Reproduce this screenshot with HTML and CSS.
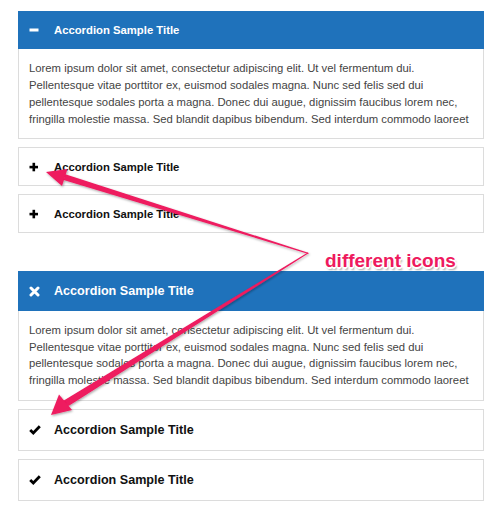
FILE: index.html
```html
<!DOCTYPE html>
<html>
<head>
<meta charset="utf-8">
<link rel="stylesheet" href="styles.css">
</head>
<body>
<div class="page">
  <div class="accordion first">
    <div class="item open">
      <div class="head">
        <span class="icon"><svg width="10" height="10" viewBox="0 0 10 10"><rect x="0.5" y="3.5" width="9" height="3" fill="#fff"/></svg></span>
        <span class="title">Accordion Sample Title</span>
      </div>
      <div class="body">
        <p>Lorem ipsum dolor sit amet, consectetur adipiscing elit. Ut vel fermentum dui. Pellentesque vitae porttitor ex, euismod sodales magna. Nunc sed felis sed dui pellentesque sodales porta a magna. Donec dui augue, dignissim faucibus lorem nec, fringilla molestie massa. Sed blandit dapibus bibendum. Sed interdum commodo laoreet</p>
      </div>
    </div>
    <div class="item">
      <div class="head">
        <span class="icon"><svg width="10" height="10" viewBox="0 0 10 10"><rect x="0.5" y="3.8" width="8.5" height="2.6" fill="#000"/><rect x="3.5" y="0.8" width="2.6" height="8.5" fill="#000"/></svg></span>
        <span class="title">Accordion Sample Title</span>
      </div>
    </div>
    <div class="item">
      <div class="head">
        <span class="icon"><svg width="10" height="10" viewBox="0 0 10 10"><rect x="0.5" y="3.8" width="8.5" height="2.6" fill="#000"/><rect x="3.5" y="0.8" width="2.6" height="8.5" fill="#000"/></svg></span>
        <span class="title">Accordion Sample Title</span>
      </div>
    </div>
  </div>

  <div class="callout"><span>different icons</span></div>

  <div class="accordion second">
    <div class="item open">
      <div class="head">
        <span class="icon"><svg width="11" height="11" viewBox="0 0 11 11"><path d="M2 2 L9 9 M9 2 L2 9" stroke="#fff" stroke-width="3" stroke-linecap="round"/></svg></span>
        <span class="title">Accordion Sample Title</span>
      </div>
      <div class="body">
        <p>Lorem ipsum dolor sit amet, consectetur adipiscing elit. Ut vel fermentum dui. Pellentesque vitae porttitor ex, euismod sodales magna. Nunc sed felis sed dui pellentesque sodales porta a magna. Donec dui augue, dignissim faucibus lorem nec, fringilla molestie massa. Sed blandit dapibus bibendum. Sed interdum commodo laoreet</p>
      </div>
    </div>
    <div class="item">
      <div class="head">
        <span class="icon"><svg width="12" height="10" viewBox="0 0 12 10"><path d="M1.2 5 L4.3 8 L10.8 1.3" fill="none" stroke="#000" stroke-width="2.8" stroke-linejoin="miter"/></svg></span>
        <span class="title">Accordion Sample Title</span>
      </div>
    </div>
    <div class="item">
      <div class="head">
        <span class="icon"><svg width="12" height="10" viewBox="0 0 12 10"><path d="M1.2 5 L4.3 8 L10.8 1.3" fill="none" stroke="#000" stroke-width="2.8" stroke-linejoin="miter"/></svg></span>
        <span class="title">Accordion Sample Title</span>
      </div>
    </div>
  </div>

  <svg class="annot" width="500" height="512" viewBox="0 0 500 512">
    <defs>
      <filter id="sh" x="-10%" y="-10%" width="120%" height="120%">
        <feDropShadow dx="0.8" dy="1.2" stdDeviation="0.8" flood-color="#000" flood-opacity="0.35"/>
      </filter>
    </defs>
    <g fill="#ee1a5e" filter="url(#sh)">
      <polygon points="65.3,174.3 63.7,179.9 308.5,254 308.2,252.7"/>
      <polygon points="46,172 67.5,169 62,186"/>
      <polygon points="63,401 68.5,406 308.5,253.3 307.8,252.5"/>
      <polygon points="51,415 59,394.5 72,410"/>
    </g>
  </svg>
</div>
</body>
</html>
```

FILE: styles.css
```css
html, body {
  margin: 0;
  padding: 0;
  background: #fff;
}

.page {
  position: relative;
  width: 500px;
  height: 512px;
  box-sizing: border-box;
  padding: 11px 16px 0 18px;
  font-family: "Liberation Sans", Arial, sans-serif;
  overflow: hidden;
}

.accordion {
  display: flex;
  flex-direction: column;
  gap: 8px;
}

.item {
  border: 1px solid #dcdcdc;
  background: #fff;
}

.head {
  display: flex;
  align-items: center;
  height: 37px;
  padding-left: 10px;
  color: #111;
}

.second .head {
  height: 40px;
}

.item.open .head {
  background: #1f72bb;
  color: #fff;
  margin: -1px -1px 0 -1px;
  padding-left: 11px;
  height: 38px;
}

.second .item.open .head {
  height: 40px;
}

.icon {
  width: 25px;
  display: flex;
  align-items: center;
}

.title {
  font-weight: bold;
  font-size: 11.3px;
}

.second .title {
  font-size: 12.6px;
}

.body {
  height: 89px;
  box-sizing: border-box;
  padding: 11px 10px 0 10px;
  overflow: hidden;
}

.body p {
  margin: 0;
  font-size: 11.3px;
  line-height: 17px;
  color: #444;
}

.second .body p {
  line-height: 16.7px;
}

.callout {
  height: 38px;
  display: flex;
  align-items: center;
  padding-left: 307px;
  padding-top: 18px;
  box-sizing: border-box;
}

.callout span {
  font-weight: bold;
  font-size: 19px;
  color: #ee1a5e;
  text-shadow:
    -1px -1px 0 #fff, 1px -1px 0 #fff, -1px 1px 0 #fff, 1px 1px 0 #fff,
    0 -1.5px 0 #fff, 0 1.5px 0 #fff, -1.5px 0 0 #fff, 1.5px 0 0 #fff,
    1.5px 2.5px 2px rgba(0,0,0,0.35);
}

.annot {
  position: absolute;
  top: 0;
  left: 0;
  pointer-events: none;
}
```
